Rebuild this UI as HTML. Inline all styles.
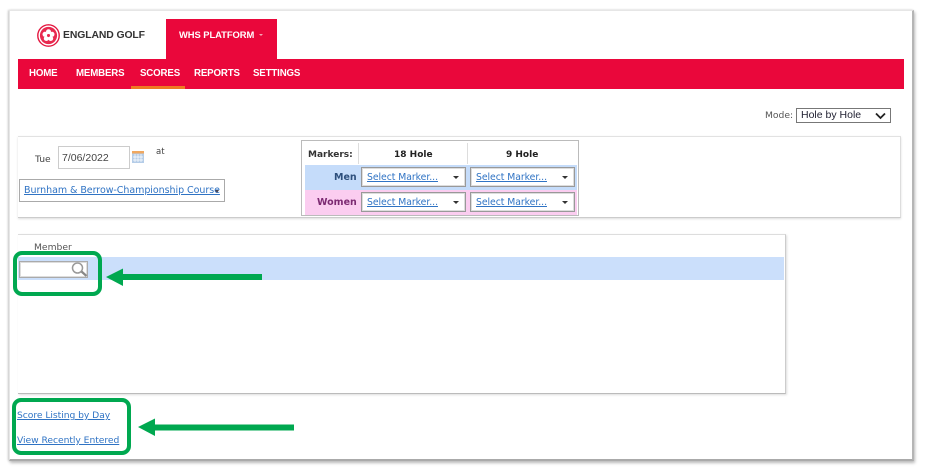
<!DOCTYPE html>
<html>
<head>
<meta charset="utf-8">
<style>
html,body{margin:0;padding:0;background:#fff}
body{position:relative;width:926px;height:475px;overflow:hidden;font-family:"DejaVu Sans","Liberation Sans",sans-serif;color:#444}
#w{position:absolute;left:0;top:0;width:926px;height:475px;filter:blur(.35px)}
.a{position:absolute;white-space:nowrap}
.lk{color:#2f73c4;text-decoration:underline;font-size:9.3px;letter-spacing:-.05px}
.nav{top:67px;color:#fff;font:bold 9.7px/14px "Liberation Sans",sans-serif;letter-spacing:-.15px}
.sel{position:absolute;width:103px;height:18px;background:#fff;border:1px solid #999;box-shadow:inset 0 0 0 1px #ddd}
.sel .lk{position:absolute;left:5px;top:3px;line-height:13px}
.sel i{position:absolute;right:6px;top:8px;border:3px solid transparent;border-top:3.5px solid #333;border-bottom:0}
.g{position:absolute;border:4px solid #00a850;border-radius:9px;box-sizing:border-box}
</style>
</head>
<body>
<div id="w">
<div class="a" style="left:9px;top:10px;width:902px;height:448px;background:#fff;border:1px solid #e6e6e6;border-right:2px solid #b5b5b5;border-bottom:2px solid #aaa;box-shadow:1px 2px 3px #bbb,-1px 0 2px #ccc"></div>

<!-- logo -->
<svg class="a" style="left:36px;top:23px" width="25" height="25" viewBox="0 0 25 25">
<circle cx="12.5" cy="12.5" r="10.7" fill="#fff" stroke="#e4163f" stroke-width="1.4"/>
<circle cx="12.5" cy="12.5" r="8.6" fill="#e8294f"/>
<g fill="#fff"><circle cx="12.500" cy="8.800" r="2.500"/><circle cx="16" cy="11.300" r="2.500"/><circle cx="14.700" cy="15.500" r="2.500"/><circle cx="10.300" cy="15.500" r="2.500"/><circle cx="9" cy="11.300" r="2.500"/></g>
<circle cx="12.5" cy="12.5" r="1.5" fill="#e8294f"/>
</svg>
<div class="a" style="left:63px;top:29px;font:bold 10.4px/14px 'Liberation Sans',sans-serif;color:#333;letter-spacing:-.1px">ENGLAND GOLF</div>

<!-- tab and bar -->
<div class="a" style="left:166px;top:19px;width:111px;height:41px;background:#ea073b"></div>
<div class="a" style="left:179px;top:28px;font:bold 9.4px/14px 'Liberation Sans',sans-serif;color:#fff;letter-spacing:-.05px">WHS PLATFORM</div>
<div class="a" style="left:259px;top:34px;border:2.5px solid transparent;border-top:2.5px solid #f5a5b5;border-bottom:0"></div>
<div class="a" style="left:18px;top:59px;width:886px;height:30px;background:#ea073b"></div>
<div class="a nav" style="left:29px">HOME</div>
<div class="a nav" style="left:76px">MEMBERS</div>
<div class="a nav" style="left:140px">SCORES</div>
<div class="a nav" style="left:194px">REPORTS</div>
<div class="a nav" style="left:253px">SETTINGS</div>
<div class="a" style="left:131px;top:86px;width:54px;height:3px;background:#ee7a22"></div>

<!-- mode -->
<div class="a" style="left:765px;top:110px;font-size:9.2px;line-height:12px;color:#555">Mode:</div>
<div class="a" style="left:796px;top:108px;width:93px;height:13px;border:1px solid #777;background:#fff;font:10.5px/13px 'Liberation Sans',sans-serif;color:#223">
<span style="margin-left:4px">Hole by Hole</span>
<svg style="position:absolute;right:3px;top:3px" width="13" height="8" viewBox="0 0 13 8"><path d="M2 1.500l4.500 4.500L11 1.500" fill="none" stroke="#222" stroke-width="1.800"/></svg>
</div>

<!-- panel 1 -->
<div class="a" style="left:18px;top:136px;width:882px;height:80px;border-top:1px solid #e2e2e2;border-bottom:1px solid #ccc;border-right:1px solid #ddd;box-shadow:0 1px 2px #ddd"></div>
<div class="a" style="left:35px;top:154px;font-size:9.2px;line-height:12px;color:#444">Tue</div>
<div class="a" style="left:58px;top:146px;width:70px;height:21px;border:1px solid #ccc;font:10.5px/22px 'Liberation Sans',sans-serif;color:#444;text-indent:3px;background:#fff">7/06/2022</div>
<svg class="a" style="left:132px;top:151px" width="12" height="12" viewBox="0 0 12 12"><rect width="12" height="12" fill="#b5cde8"/><rect width="12" height="2.500" fill="#f0a860"/><path d="M3 3v8M6 3v8M9 3v8M1 6h10M1 9h10" stroke="#fff" stroke-width=".7"/></svg>
<div class="a" style="left:156px;top:147px;font-size:8.5px;line-height:11px;color:#444">at</div>
<div class="a" style="left:19px;top:179px;width:204px;height:21px;border:1px solid #aaa;background:#fff"></div>
<div class="a lk" style="left:24px;top:185px;line-height:12px;font-size:9.5px">Burnham &amp; Berrow-Championship Course</div>
<div class="a" style="left:215px;top:190px;border:2.5px solid transparent;border-top:3px solid #445;border-bottom:0"></div>

<!-- markers table -->
<div class="a" style="left:301px;top:140px;width:276px;height:74px;border:1.5px solid #bbb;background:#fff"></div>
<div class="a" style="left:358px;top:143px;width:1px;height:21px;background:#ddd"></div>
<div class="a" style="left:467px;top:143px;width:1px;height:21px;background:#ddd"></div>
<div class="a" style="left:308px;top:149px;font:bold 9px/12px 'DejaVu Sans',sans-serif;color:#333">Markers:</div>
<div class="a" style="left:394px;top:149px;font:bold 9px/12px 'DejaVu Sans',sans-serif;color:#222">18 Hole</div>
<div class="a" style="left:506px;top:149px;font:bold 9px/12px 'DejaVu Sans',sans-serif;color:#222">9 Hole</div>
<div class="a" style="left:305px;top:165px;width:272px;height:25px;background:#c5dcfa"></div>
<div class="a" style="left:305px;top:190px;width:272px;height:25px;background:#fbcdf0"></div>
<div class="a" style="left:334px;top:172px;font:bold 9.5px/12px 'DejaVu Sans',sans-serif;color:#2d4f7c">Men</div>
<div class="a" style="left:317px;top:197px;font:bold 9.5px/12px 'DejaVu Sans',sans-serif;color:#7c2a72">Women</div>
<div class="sel" style="left:361px;top:167px"><span class="lk">Select Marker...</span><i></i></div>
<div class="sel" style="left:470px;top:167px"><span class="lk">Select Marker...</span><i></i></div>
<div class="sel" style="left:361px;top:192px"><span class="lk">Select Marker...</span><i></i></div>
<div class="sel" style="left:470px;top:192px"><span class="lk">Select Marker...</span><i></i></div>

<!-- panel 2 -->
<div class="a" style="left:18px;top:234px;width:767px;height:158px;border-top:1px solid #ddd;border-right:1px solid #ccc;border-bottom:1px solid #bbb;box-shadow:1px 1px 2px #ddd"></div>
<div class="a" style="left:34px;top:242px;font-size:9.2px;line-height:12px;color:#555">Member</div>
<div class="a" style="left:18px;top:257px;width:766px;height:23px;background:#cbdffb"></div>
<div class="a" style="left:19px;top:261px;width:67px;height:15px;border:1px solid #aaa;box-shadow:inset 0 0 0 1px #ddd;background:#fff"></div>
<svg class="a" style="left:70px;top:261px" width="19" height="17" viewBox="0 0 19 17"><circle cx="7.500" cy="7" r="5" fill="#fff" stroke="#999" stroke-width="1.500"/><path d="M11.500 10.500l5 4.500" stroke="#888" stroke-width="2.200"/></svg>

<!-- links -->
<div class="a lk" style="left:17px;top:409px;line-height:13px;font-size:9.2px">Score Listing by Day</div>
<div class="a lk" style="left:17px;top:434px;line-height:13px;font-size:9.2px">View Recently Entered</div>

<!-- annotations -->
<div class="g" style="left:13px;top:251px;width:89px;height:45px"></div>
<div class="g" style="left:12px;top:398px;width:119px;height:57px"></div>
<svg class="a" style="left:100px;top:260px" width="200" height="185" viewBox="0 0 200 185">
<path d="M6 17L23 8.500V14H162V20H23V26z" fill="#00a850"/>
<path d="M38 167L55 158.500V164.500H194V170.500H55V176z" fill="#00a850"/>
</svg>
</div>
</body>
</html>
